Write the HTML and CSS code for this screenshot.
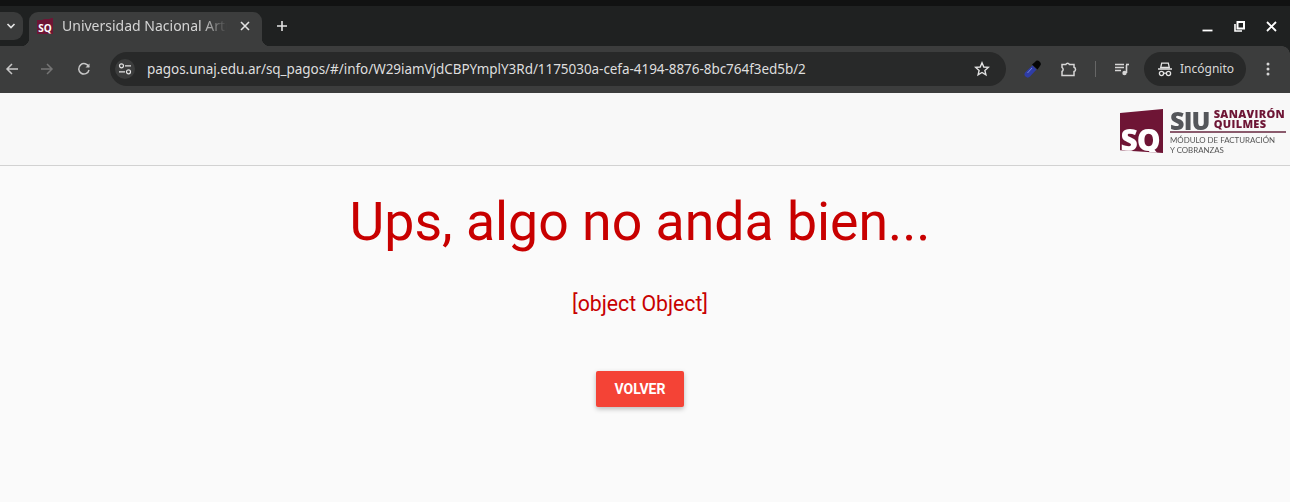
FILE: index.html
```html
<!DOCTYPE html>
<html lang="es">
<head>
<meta charset="utf-8">
<title>Universidad Nacional Arturo Jauretche</title>
<link rel="stylesheet" href="styles.css">
</head>
<body>
<div class="topstrip"></div>
<div class="tabbar">
  <div class="tabsearch"><svg width="10" height="6" viewBox="0 0 10 6"><path d="M1.5 1 5 4.500 8.500 1" fill="none" stroke="#e3e3e3" stroke-width="1.700"/></svg></div>
  <div class="tab">
    <div class="favicon"><span>SQ</span></div>
    <span class="tabtitle">Universidad Nacional Arturo</span>
    <svg class="tabclose" width="10" height="10" viewBox="0 0 10 10"><path d="M1 1 9 9M9 1 1 9" stroke="#e3e3e3" stroke-width="1.600"/></svg>
  </div>
  <svg class="newtab" width="12" height="12" viewBox="0 0 12 12"><path d="M6 1v10M1 6h10" stroke="#e3e3e3" stroke-width="1.600"/></svg>
  <div class="winctrls">
    <svg width="11" height="11" viewBox="0 0 11 11"><path d="M.5 9.500h10" stroke="#fff" stroke-width="1.800"/></svg>
    <svg width="11" height="11" viewBox="0 0 11 11"><path d="M3.500 1h6.500v6.500H3.500z" fill="none" stroke="#fff" stroke-width="2"/><path d="M1 3v7h7" fill="none" stroke="#fff" stroke-width="1.600"/></svg>
    <svg width="11" height="11" viewBox="0 0 11 11"><path d="M1 1l9 9M10 1l-9 9" stroke="#fff" stroke-width="1.800"/></svg>
  </div>
</div>
<div class="toolbar">
  <svg class="navbtn" width="14" height="14" viewBox="0 0 14 14"><path d="M13 7H2M7 2 2 7l5 5" fill="none" stroke="#c7c7c7" stroke-width="1.500"/></svg>
  <svg class="navbtn fwd" width="14" height="14" viewBox="0 0 14 14"><path d="M1 7h11M7 2l5 5-5 5" fill="none" stroke="#757575" stroke-width="1.500"/></svg>
  <svg class="navbtn reload" width="14" height="14" viewBox="0 0 14 14"><path d="M11.800 5A5.200 5.200 0 1 0 12 8" fill="none" stroke="#c7c7c7" stroke-width="1.500"/><path d="M12.500 1.500v4h-4z" fill="#c7c7c7"/></svg>
  <div class="omnibox">
    <div class="siteinfo"><svg width="14" height="12" viewBox="0 0 14 12"><circle cx="3.500" cy="2.800" r="2" fill="none" stroke="#e3e3e3" stroke-width="1.200"/><path d="M7 2.800h6M1 8.800h6" stroke="#e3e3e3" stroke-width="1.200"/><circle cx="10.500" cy="8.800" r="2" fill="none" stroke="#e3e3e3" stroke-width="1.200"/></svg></div>
    <span class="url">pagos.unaj.edu.ar/sq_pagos/#/info/W29iamVjdCBPYmplY3Rd/1175030a-cefa-4194-8876-8bc764f3ed5b/2</span>
    <svg class="star" width="16" height="16" viewBox="0 0 16 16"><path d="M8 1.800 9.800 6l4.500.4-3.400 3 1 4.400L8 11.500 4.100 13.800l1-4.400-3.400-3L6.200 6z" fill="none" stroke="#e3e3e3" stroke-width="1.400"/></svg>
  </div>
  <svg class="dropper" width="18" height="18" viewBox="0 0 18 18"><path d="M8 4.500 11 2a3 3 0 0 1 5 4l-2.500 3.500z" fill="#050505"/><path d="M8.500 5.500 12.500 9.500 6 16.500a2.800 2.800 0 0 1-4.500-4.500z" fill="#2f3da6"/><path d="M8 8 3.500 13" stroke="#7483dc" stroke-width="1"/></svg>
  <svg class="puzzle" width="18" height="18" viewBox="0 0 18 18"><path d="M2 4.500H5.800a2 2 0 0 1 3.600 0H14V7.300a2.200 2.200 0 0 1 0 4.200V15.500H2V11.500a2.500 2.500 0 0 0 0-4.200z" fill="none" stroke="#d6d6d6" stroke-width="1.500"/></svg>
  <div class="tooldivider"></div>
  <svg class="media" width="16" height="14" viewBox="0 0 16 14"><path d="M1 2.500h9M1 5.500h9M1 8.500h6" stroke="#d6d6d6" stroke-width="1.400"/><path d="M12.500 3v8" stroke="#d6d6d6" stroke-width="1.600"/><path d="M12 2.500h3" stroke="#d6d6d6" stroke-width="1.600"/><circle cx="10.500" cy="11" r="2.200" fill="#d6d6d6"/></svg>
  <div class="incognito">
    <svg width="16" height="15" viewBox="0 0 16 15"><path d="M4.700 1.200h6.600l1 4.300H3.700z" fill="none" stroke="#e3e3e3" stroke-width="1.300"/><path d="M1 7h14" stroke="#e3e3e3" stroke-width="1.500"/><circle cx="4.500" cy="11.500" r="2.100" fill="none" stroke="#e3e3e3" stroke-width="1.300"/><circle cx="11.500" cy="11.500" r="2.100" fill="none" stroke="#e3e3e3" stroke-width="1.300"/><path d="M6.600 11.200h2.800" stroke="#e3e3e3" stroke-width="1.200"/></svg>
    <span>Incógnito</span>
  </div>
  <svg class="menu" width="4" height="14" viewBox="0 0 4 14"><circle cx="2" cy="2" r="1.500" fill="#d6d6d6"/><circle cx="2" cy="7" r="1.500" fill="#d6d6d6"/><circle cx="2" cy="12" r="1.500" fill="#d6d6d6"/></svg>
</div>
<header class="apphead">
  <div class="logo">
    <div class="logomark"><span>SQ</span></div>
    <div class="logotext">
      <div class="logotop">
        <span class="siu">SIU</span>
        <div class="sana"><span>SANAVIRÓN</span><span>QUILMES</span></div>
      </div>
      <div class="logosub"><span>MÓDULO DE FACTURACIÓN</span><span>Y COBRANZAS</span></div>
    </div>
  </div>
</header>
<main class="content">
  <h1>Ups, algo no anda bien...</h1>
  <p>[object Object]</p>
  <button class="volver">VOLVER</button>
</main>
</body>
</html>
```
FILE: styles.css
```css
* { box-sizing: border-box; }
html, body { margin: 0; padding: 0; height: 502px; overflow: hidden; }
body { background: #fafafa; font-family: Roboto, sans-serif; display: flex; flex-direction: column; }
svg { display: block; flex: none; }

.topstrip { height: 6px; background: #111212; }

.tabbar { height: 40px; background: #1f2121; display: flex; align-items: center; position: relative; }
.tabsearch { width: 24px; height: 28px; margin-left: -1px; border-radius: 0 9px 9px 0; background: #3a3b3b; display: flex; align-items: center; justify-content: center; }
.tab { width: 233px; height: 34px; margin-top: 6px; margin-left: 6px; padding: 0 0 6px 8px; background: #3c3d3d; border-radius: 9px 9px 0 0; display: flex; align-items: center; position: relative; }
.tab::before, .tab::after { content: ""; position: absolute; bottom: 0; width: 8px; height: 8px; }
.tab::before { left: -8px; background: radial-gradient(circle at 0 0, transparent 8px, #3c3d3d 8.500px); }
.tab::after { right: -8px; background: radial-gradient(circle at 100% 0, transparent 8px, #3c3d3d 8.500px); }
.favicon { width: 16px; height: 16px; background: linear-gradient(172deg, #3c3d3d 12%, #6e1535 14%); display: flex; align-items: flex-end; justify-content: center; flex: none; }
.favicon span { font: 700 10px/12px "Open Sans", sans-serif; color: #fff; }
.tabtitle { margin-left: 9px; width: 165px; overflow: hidden; white-space: nowrap; font: 400 14px/18px "Noto Sans", sans-serif; color: #d4d4d4; -webkit-mask-image: linear-gradient(90deg, #000 85%, transparent 100%); mask-image: linear-gradient(90deg, #000 85%, transparent 100%); }
.tabclose { position: absolute; left: 211px; top: 9px; }
.newtab { margin-left: 14px; }
.winctrls { margin-left: auto; display: flex; gap: 21px; padding-right: 13px; align-items: center; }

.toolbar { height: 47px; padding-bottom: 1px; background: #3c3d3d; display: flex; align-items: center; position: relative; }
.toolbar::after { content: ""; position: absolute; top: 0; right: 0; width: 8px; height: 8px; background: radial-gradient(circle at 0 100%, transparent 7.500px, #1f2121 8px); }
.navbtn { margin-left: 5px; }
.navbtn.fwd { margin-left: 21px; }
.navbtn.reload { margin-left: 23px; }
.omnibox { width: 896px; height: 34px; margin-left: 19px; border-radius: 17px; background: #282929; display: flex; align-items: center; padding-left: 5px; }
.siteinfo { width: 20px; height: 20px; border-radius: 50%; background: #3c3d3d; display: flex; align-items: center; justify-content: center; }
.url { margin-left: 12px; padding-bottom: 1px; font: 400 13.500px/18px "Noto Sans", sans-serif; color: #dedede; white-space: nowrap; letter-spacing: -.05px; }
.star { margin-left: auto; margin-right: 16px; }
.dropper { margin-left: 18px; }
.puzzle { margin-left: 18px; }
.tooldivider { width: 1px; height: 16px; background: #666; margin-left: 17px; }
.media { margin-left: 18px; }
.incognito { width: 102px; height: 34px; margin-left: 14px; border-radius: 17px; background: #282929; display: flex; align-items: center; padding-left: 13px; gap: 7px; }
.incognito span { font: 400 12px/16px "Noto Sans", sans-serif; color: #d8d8d8; padding-bottom: 1px; }
.menu { margin-left: 20px; }

.apphead { height: 73px; background: #f8f8f8; border-bottom: 1px solid #d2d2d2; display: flex; justify-content: flex-end; align-items: flex-start; padding: 16px 4px 0 0; }
.logo { display: flex; align-items: flex-start; filter: blur(.35px); }
.logomark { width: 43px; height: 44px; background: #6e1535; clip-path: polygon(0 4px, 100% 0, 100% 100%, 0 94%); display: flex; align-items: flex-end; justify-content: center; }
.logomark span { font: 800 30px/27px "Open Sans", sans-serif; color: #fff; letter-spacing: -1px; margin-right: 3px; }
.logotext { margin-left: 7px; width: 116px; }
.logotop { display: flex; align-items: center; gap: 4px; height: 24px; border-bottom: 2px solid #8a5a6c; }
.siu { font: 800 25px/22px "Open Sans", sans-serif; color: #54565a; letter-spacing: -.8px; }
.sana { display: flex; flex-direction: column; padding-bottom: 2px; font: 800 11px/10px "Open Sans", sans-serif; color: #6e1535; letter-spacing: .35px; }
.logosub { margin-top: 2px; display: flex; flex-direction: column; font: 400 7.900px/10px Lato, sans-serif; color: #555; white-space: nowrap; }

.content { flex: 1; padding-right: 10px; display: flex; flex-direction: column; align-items: center; color: #c80000; }
h1 { margin: 21px 0 0; font: 400 53.600px/70px Roboto, sans-serif; }
p { margin: 35px 0 0; font: 400 21.250px/24px Roboto, sans-serif; }
.volver { margin-top: 55px; width: 88px; height: 36px; border: 0; border-radius: 2px; background: #f44336; color: #fff; font: 700 14px/36px Roboto, sans-serif; padding: 0; box-shadow: 0 2px 5px rgba(0,0,0,.26); }
```
